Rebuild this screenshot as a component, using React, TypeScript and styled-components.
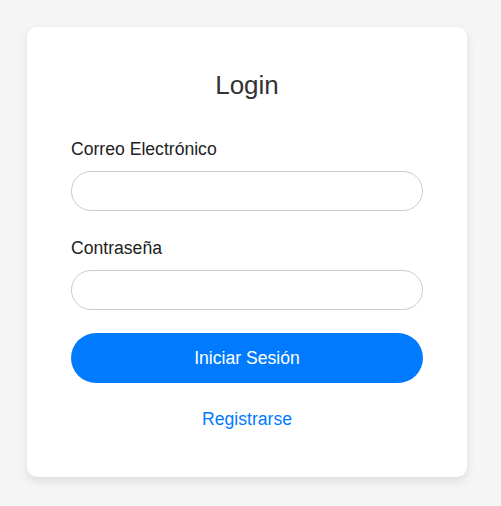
import React from 'react';
import styled, {createGlobalStyle} from "styled-components";

const GlobalStyle = createGlobalStyle`
    * {
        box-sizing: border-box;
    }
    body {
        margin: 0;
        background: #f5f5f5;
        font-family: "Liberation Sans", Arial, sans-serif;
        color: #333;
    }
`

export default function App() {
    return (
        <>
            <GlobalStyle/>
            <Page>
                <Card>
                    <Title>Login</Title>
                    <Field>
                        <Label htmlFor="email">Correo Electrónico</Label>
                        <Input id="email" type="email"/>
                    </Field>
                    <Field>
                        <Label htmlFor="password">Contraseña</Label>
                        <Input id="password" type="password"/>
                    </Field>
                    <SubmitButton type="button">Iniciar Sesión</SubmitButton>
                    <RegisterLink href="#">Registrarse</RegisterLink>
                </Card>
            </Page>
        </>
    );
}

const Page = styled.div`
    padding: 27px;
    min-height: 506px;
`
const Card = styled.div`
    width: 440px;
    background: #fff;
    border-radius: 10px;
    box-shadow: 0 4px 10px rgba(0, 0, 0, 0.1);
    padding: 43px 44px 47px;
    display: flex;
    flex-direction: column;
`
const Title = styled.h2`
    margin: 0 0 38px;
    font-size: 26px;
    font-weight: 400;
    text-align: center;
    color: #333;
`
const Field = styled.div`
    display: flex;
    flex-direction: column;
    gap: 11px;
    margin-bottom: 27px;

    &:last-of-type {
        margin-bottom: 23px;
    }
`
const Label = styled.label`
    font-size: 17.6px;
    color: #222;
`
const Input = styled.input`
    height: 40px;
    width: 100%;
    border: 1px solid #ccc;
    border-radius: 20px;
    padding: 0 16px;
    font-size: 16px;
    font-family: inherit;
    outline: none;
`
const SubmitButton = styled.button`
    height: 50px;
    border: none;
    border-radius: 25px;
    background: #007bff;
    color: #fff;
    font-family: inherit;
    font-size: 17.6px;
    cursor: pointer;
`
const RegisterLink = styled.a`
    margin-top: 26px;
    align-self: center;
    font-size: 17.6px;
    color: #007bff;
    text-decoration: none;
`
